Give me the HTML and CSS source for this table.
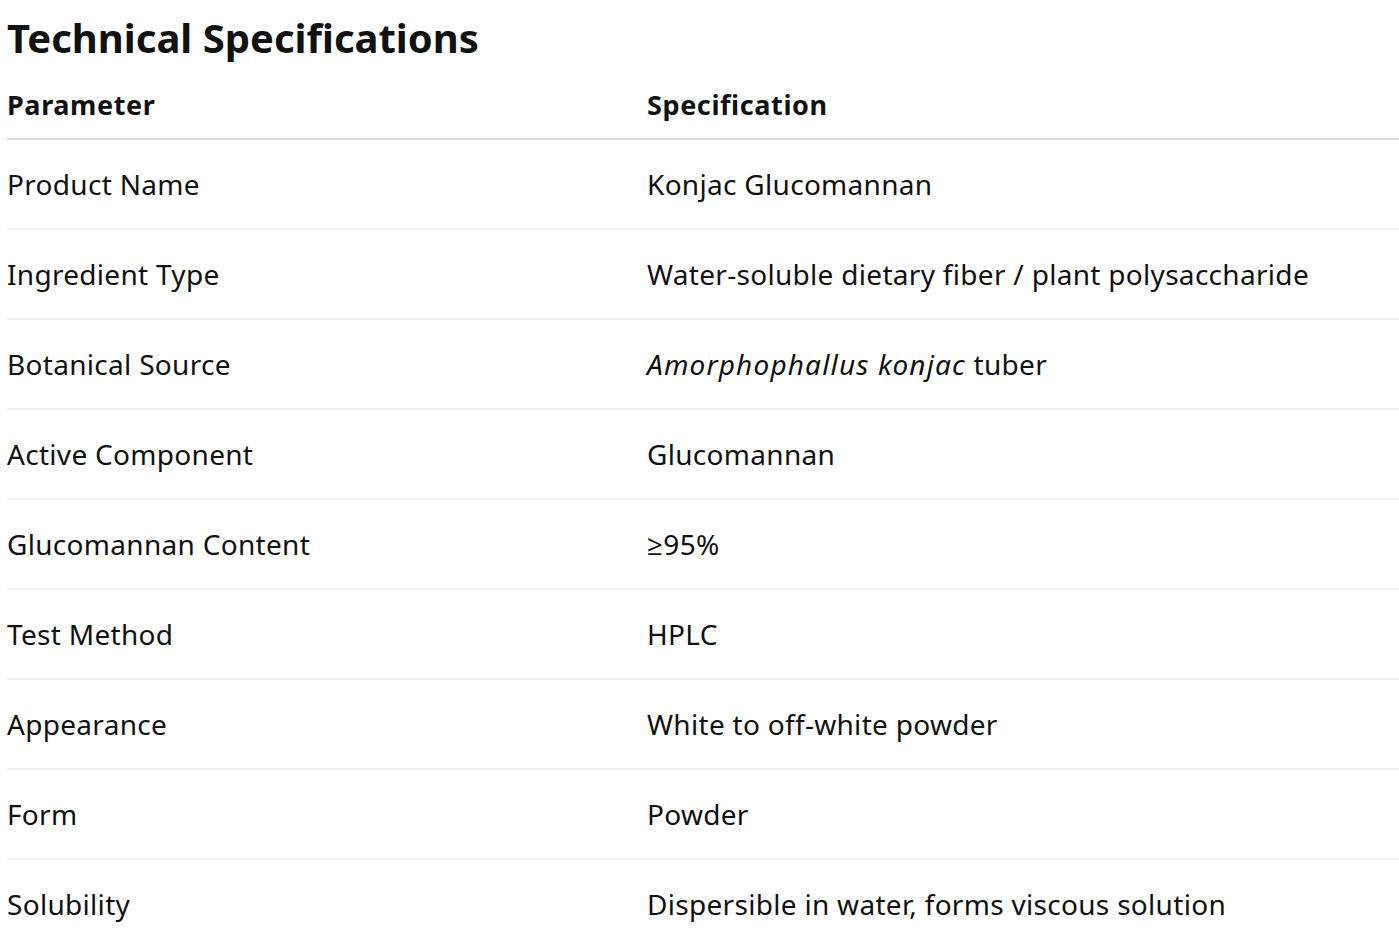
FILE: index.html
```html
<!DOCTYPE html>
<html lang="en">
<head>
<meta charset="utf-8">
<title>Technical Specifications</title>
<link rel="stylesheet" href="styles.css">
</head>
<body>
<h1 class="title">Technical Specifications</h1>
<table class="spec">
  <thead>
    <tr><th class="col-param">Parameter</th><th>Specification</th></tr>
  </thead>
  <tbody>
    <tr><td>Product Name</td><td>Konjac Glucomannan</td></tr>
    <tr><td>Ingredient Type</td><td>Water-soluble dietary fiber / plant polysaccharide</td></tr>
    <tr><td>Botanical Source</td><td><em>Amorphophallus konjac</em> tuber</td></tr>
    <tr><td>Active Component</td><td>Glucomannan</td></tr>
    <tr><td>Glucomannan Content</td><td>≥95%</td></tr>
    <tr><td>Test Method</td><td>HPLC</td></tr>
    <tr><td>Appearance</td><td>White to off-white powder</td></tr>
    <tr><td>Form</td><td>Powder</td></tr>
    <tr><td>Solubility</td><td>Dispersible in water, forms viscous solution</td></tr>
  </tbody>
</table>
</body>
</html>
```
FILE: styles.css
```css
html, body {
  margin: 0;
  padding: 0;
  background: #fff;
  overflow: hidden;
}
body {
  font-family: "Noto Sans", "Open Sans", sans-serif;
  color: #111;
  padding-left: 7px;
}
.title {
  font-size: 40px;
  font-weight: 700;
  line-height: 60px;
  margin: 8px 0 0 0;
  color: #111;
}
.spec {
  border-collapse: collapse;
  width: 1420px;
  font-size: 28px;
  letter-spacing: 0.3px;
  margin-top: 1px;
}
.spec th, .spec td {
  text-align: left;
  padding: 24px 0;
  line-height: 40px;
  vertical-align: middle;
}
.spec th {
  font-size: 27px;
  letter-spacing: 0.6px;
  font-weight: 700;
  padding: 16px 0 13px;
  border-bottom: 2px solid #dcdcdc;
}
.col-param {
  width: 640px;
}
.spec td {
  border-bottom: 2px solid #f1f1f1;
}
.spec em {
  font-style: italic;
  letter-spacing: 1.15px;
}
```
